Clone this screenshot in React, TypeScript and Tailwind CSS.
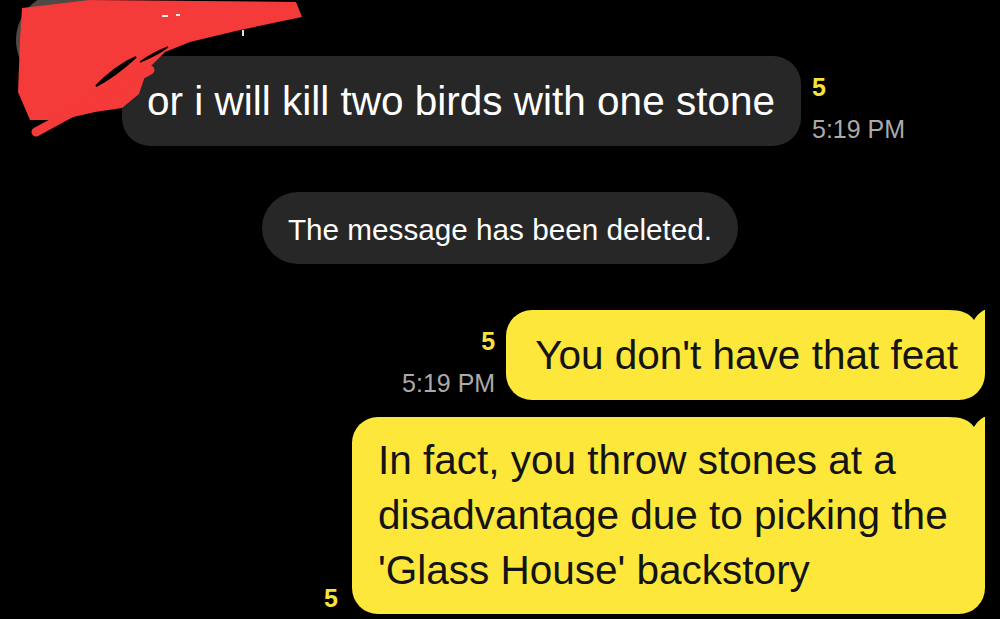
import type { ReactNode } from 'react';

const FONT = { fontFamily: '"Liberation Sans", Arial, sans-serif' };

function Tail() {
  // small horn on the top-right corner of a sent bubble
  return (
    <svg
      width="40"
      height="16"
      viewBox="0 0 40 16"
      className="absolute -top-[2px] -right-[3px]"
    >
      <path d="M0 2 C 14 2, 21 5, 26 12 C 29 7, 33 3, 39 1 L 40 0 L 0 0 Z" fill="#000" />
    </svg>
  );
}

function Meta({ time, align }: { time: boolean; align: 'left' | 'right' }) {
  return (
    <div className={`flex flex-col ${align === 'right' ? 'items-end' : 'items-start'}`}>
      <span className="text-[25px] font-bold leading-none text-[#f6e33b]">5</span>
      {time && <span className="mt-[17px] text-[25px] leading-none text-[#aaaaaa]">5:19 PM</span>}
    </div>
  );
}

function SentBubble({ children, className }: { children: ReactNode; className: string }) {
  return (
    <div className={`relative rounded-[26px] rounded-tr-none bg-[#fde73b] text-[#141414] ${className}`}>
      {children}
      <Tail />
    </div>
  );
}

function Scribble() {
  return (
    <svg width="310" height="140" viewBox="0 0 310 140" className="absolute left-0 top-0">
      <circle cx="64" cy="40" r="48" fill="#4f4a45" />
      <path
        d="M22 8 L90 0 L296 2 L302 17 L240 30 L190 42 L165 52 L147 70 L139 94 L122 108 L95 112 L60 120 L30 120 L18 92 L20 40 Z"
        fill="#f53a3a"
      />
      <path d="M36 132 L150 70" stroke="#f53a3a" strokeWidth="9" strokeLinecap="round" />
      <path d="M96 86 C 108 74, 120 64, 136 57 C 124 68, 112 78, 96 86 Z" fill="#000" stroke="#000" strokeWidth="2" />
      <path d="M140 62 C 150 55, 158 51, 168 47 C 160 53, 150 58, 140 62 Z" fill="#000" stroke="#000" strokeWidth="1.5" />
      <path d="M162 16 L168 16 M176 15 L180 15" stroke="#eee" strokeWidth="2" />
      <path d="M243 30 L243 36" stroke="#ddd" strokeWidth="2" />
    </svg>
  );
}

export default function App() {
  return (
    <div className="relative h-[619px] w-[1000px] overflow-hidden bg-black" style={FONT}>
      {/* received message */}
      <div className="flex items-end pl-[122px] pt-[56px]">
        <div className="flex h-[90px] items-center rounded-[28px] bg-[#272727] pl-[25px] pr-[26px] text-[40.5px] leading-none text-white">
          or i will kill two birds with one stone
        </div>
        <div className="mb-[4px] ml-[11px]">
          <Meta time align="left" />
        </div>
      </div>

      {/* deleted notice */}
      <div className="mt-[46px] flex justify-center">
        <div className="flex h-[72px] w-[476px] items-center justify-center rounded-full bg-[#272727] pt-[4px] text-[29.7px] text-white">
          The message has been deleted.
        </div>
      </div>

      {/* sent messages */}
      <div className="mt-[46px] flex items-end justify-end pr-[15px]">
        <div className="mb-[4px] mr-[11px]">
          <Meta time align="right" />
        </div>
        <SentBubble className="flex h-[90px] items-center pl-[29px] pr-[27px] text-[40.5px] leading-none">
          You don't have that feat
        </SentBubble>
      </div>

      <div className="mt-[17px] flex items-end justify-end pr-[15px]">
        <div className="mb-[3px] mr-[14px]">
          <Meta time={false} align="right" />
        </div>
        <SentBubble className="h-[197px] w-[633px] pl-[26px] pr-[20px] pt-[16px] text-[40.5px] leading-[55px]">
          In fact, you throw stones at a disadvantage due to picking the 'Glass House' backstory
        </SentBubble>
      </div>

      <Scribble />
    </div>
  );
}
